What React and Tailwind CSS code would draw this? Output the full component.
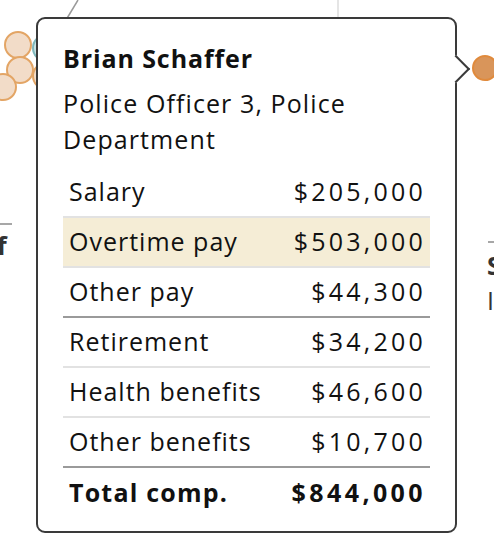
import React from 'react';

const rows = [
  { label: 'Salary', value: '$205,000', line: 'border-[#e2e2e2]' },
  { label: 'Overtime pay', value: '$503,000', line: 'border-[#e2e2e2]', hi: true },
  { label: 'Other pay', value: '$44,300', line: 'border-[#9a9a9a]' },
  { label: 'Retirement', value: '$34,200', line: 'border-[#e2e2e2]' },
  { label: 'Health benefits', value: '$46,600', line: 'border-[#e2e2e2]' },
  { label: 'Other benefits', value: '$10,700', line: 'border-[#9a9a9a]' },
];

function Backdrop() {
  return (
    <svg className="absolute inset-0" width="494" height="552">
      <line x1="78" y1="0" x2="66" y2="20" stroke="#9a9a9a" strokeWidth="1.5" />
      <line x1="338" y1="0" x2="338" y2="20" stroke="#dcdcdc" strokeWidth="1.5" />
      <circle cx="46" cy="48" r="13" fill="#c9e3e4" stroke="#7fb8bc" strokeWidth="2" />
      <circle cx="46" cy="76" r="13" fill="#f2dcc8" stroke="#e3a565" strokeWidth="2" />
      <circle cx="18" cy="45" r="13" fill="#f2dcc8" stroke="#e3a565" strokeWidth="2" />
      <circle cx="20" cy="70" r="13" fill="#f2dcc8" stroke="#e3a565" strokeWidth="2" />
      <circle cx="3" cy="87" r="13" fill="#f2dcc8" stroke="#e3a565" strokeWidth="2" />
      <circle cx="485" cy="68" r="12" fill="#d9955a" stroke="#e08a3c" strokeWidth="2" />
      <line x1="0" y1="224" x2="12" y2="224" stroke="#8a8a8a" strokeWidth="1.5" />
      <line x1="488" y1="242" x2="494" y2="242" stroke="#8a8a8a" strokeWidth="1.5" />
    </svg>
  );
}

export default function App() {
  return (
    <div className="relative w-[494px] h-[552px] overflow-hidden bg-white" style={{ fontFamily: '"Open Sans", "Noto Sans", sans-serif' }}>
      <Backdrop />
      <span className="absolute left-[-3px] top-[229px] text-[25px] font-bold text-[#333] leading-[32px]">f</span>
      <span className="absolute left-[487px] top-[249px] text-[25px] font-bold text-[#333] leading-[32px]">S</span>
      <span className="absolute left-[487px] top-[284px] text-[25px] text-[#333] leading-[32px]">I</span>

      <div className="absolute left-[36px] top-[17px] w-[421px] bg-white border-2 border-[#3a3a3a] rounded-[9px] pl-[25px] pr-[25px] pt-[21px] pb-[14px] text-[#111]">
        <div className="absolute right-[-11px] top-[40px] w-[20px] h-[20px] rotate-45 bg-white border-t-2 border-r-2 border-[#3a3a3a]" />
        <div className="text-[25px] font-bold leading-[36px] tracking-[0.9px]">Brian Schaffer</div>
        <div className="mt-[9px] text-[25px] leading-[36px] tracking-[1.1px]">Police Officer 3, Police<br />Department</div>
        <div className="mt-[11px] flex flex-col">
          {rows.map((r) => (
            <div
              key={r.label}
              className={`flex items-center justify-between h-[50px] pl-[6px] pr-[4px] border-b-2 ${r.line} ${r.hi ? 'bg-[#f5edd6]' : ''}`}
            >
              <span className="text-[25px] tracking-[1px]">{r.label}</span>
              <span className="text-[25px] tracking-[3.2px]">{r.value}</span>
            </div>
          ))}
          <div className="flex items-center justify-between h-[49px] pl-[6px] pr-[4px] font-bold">
            <span className="text-[25px] tracking-[1.2px]">Total comp.</span>
            <span className="text-[25px] tracking-[3.4px]">$844,000</span>
          </div>
        </div>
      </div>
    </div>
  );
}
